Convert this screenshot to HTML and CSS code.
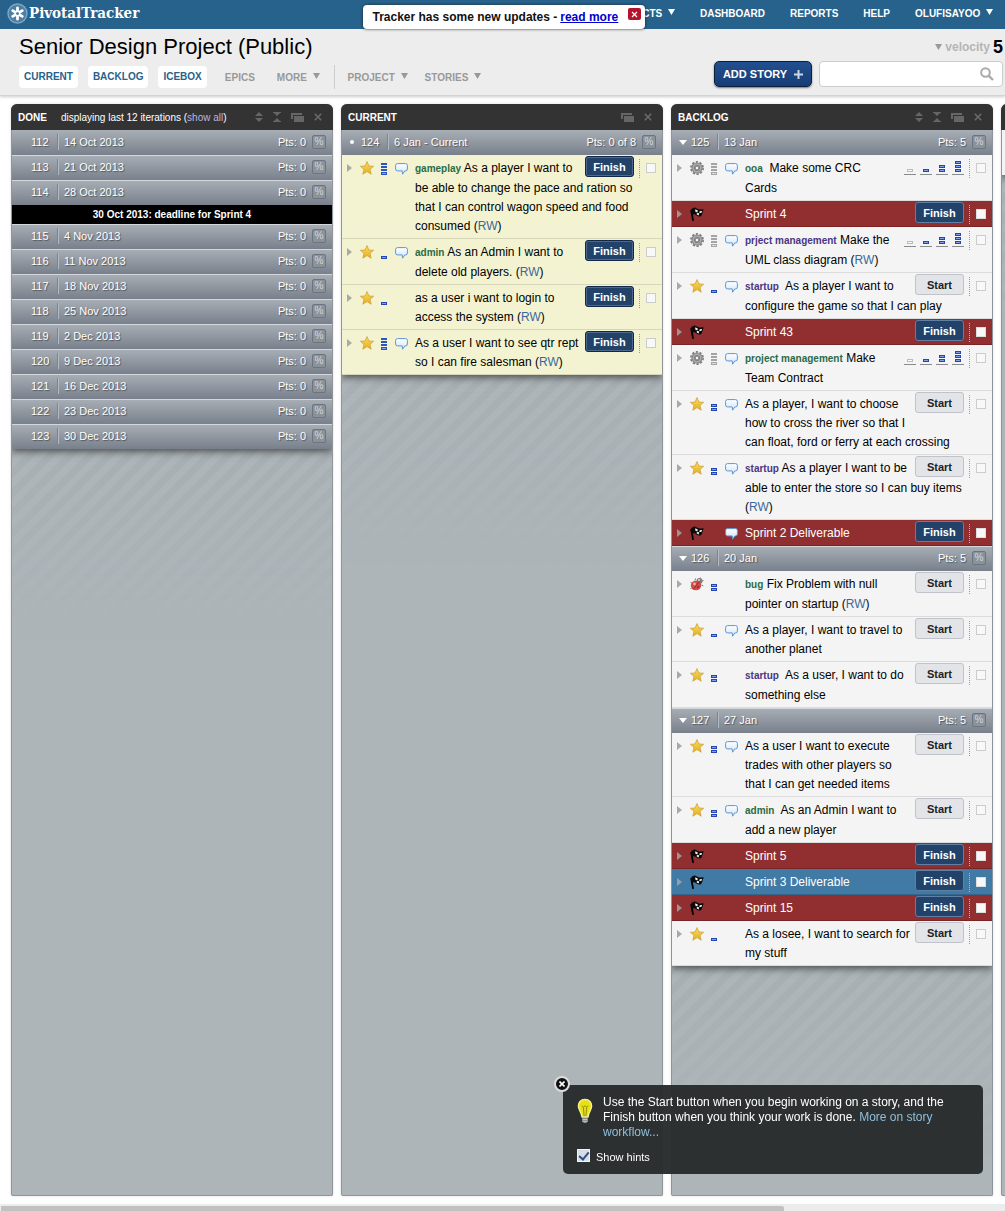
FILE: index.html
```html
<!DOCTYPE html>
<html lang="en">
<head>
<meta charset="utf-8">
<title>Senior Design Project - Pivotal Tracker</title>
<link rel="stylesheet" href="styles.css">
</head>
<body>
<svg class="sprite" aria-hidden="true">
  <defs>
    <linearGradient id="gold" x1="0" y1="0" x2="0" y2="1"><stop offset="0" stop-color="#f9dc63"/><stop offset="1" stop-color="#e5ae1c"/></linearGradient>
    <linearGradient id="sky" x1="0" y1="0" x2="0" y2="1"><stop offset="0" stop-color="#ffffff"/><stop offset="1" stop-color="#cfe3f8"/></linearGradient>
  </defs>
  <symbol id="caret" viewBox="0 0 5 8"><path d="M0 0L5 4L0 8z" fill="#a9a9a9"/></symbol>
  <symbol id="star" viewBox="0 0 14 14"><path d="M7 .6L8.9 5L13.6 5.3L10 8.4L11.2 13.2L7 10.6L2.8 13.2L4 8.4L.4 5.3L5.1 5z" fill="url(#gold)" stroke="#cfa23a" stroke-width=".8" stroke-linejoin="round"/></symbol>
  <symbol id="gear" viewBox="0 0 14 14"><circle cx="7" cy="7" r="6.100" fill="none" stroke="#777" stroke-width="1.600" stroke-dasharray="2.200 1.630"/><circle cx="7" cy="7" r="5.600" fill="#858585"/><circle cx="7" cy="7" r="3.800" fill="none" stroke="#adadad" stroke-width="1.400"/><circle cx="7" cy="7" r="1.900" fill="#f4f4f4" stroke="#6d6d6d" stroke-width=".8"/></symbol>
  <symbol id="bug" viewBox="0 0 14 14"><path d="M8 3L11 .8M10.500 5L13.500 3.500M11.500 8L13.300 8.800M5 3.500L5.500 1.500M1.500 6L.5 4.800M1.500 11L.5 12" stroke="#777" stroke-width="1"/><circle cx="9.500" cy="4" r="3" fill="#8a7d7d"/><ellipse cx="6" cy="8.500" rx="5.200" ry="4.800" fill="#cf4a48"/><path d="M9.500 4.500L3 12.500" stroke="#8e2424" stroke-width=".8"/><circle cx="4.500" cy="7" r="1.400" fill="#efb0a8"/><circle cx="8" cy="10" r="1" fill="#8e2424"/><circle cx="9" cy="3" r="1" fill="#ddd"/></symbol>
  <symbol id="flag" viewBox="0 0 14 14"><path d="M1.300 4L3 13.200" stroke="#000" stroke-width="1.800" stroke-linecap="round"/><path d="M.6 3.500C2.500 1 4 .2 5.500 .8S8.500 3 10.500 2.500L13.700 2.300L12.300 6.500C11.500 9.500 10 10 8 9.300C6 8.500 5 6.800 2.800 7.500L2 7.800z" fill="#0a0a0a"/><path d="M5.300 2.300L7.800 3.500L7.300 5.600L5.200 4.600zM9.600 4.200L12.200 3.900L11.300 6L9.400 6zM6.900 6L9.200 6.300L8.700 8.500L6.700 7.500z" fill="#f0f0f0"/></symbol>
  <symbol id="bubble" viewBox="0 0 13 12"><path d="M2.500 .6H10.500Q12.400 .6 12.400 2.500V6Q12.400 7.900 10.500 7.900H9.800L7.600 11.200L7.200 7.900H2.500Q.6 7.900 .6 6V2.500Q.6 .6 2.500 .6z" fill="url(#sky)" stroke="#5f96d2" stroke-width="1"/></symbol>
  <symbol id="bar" viewBox="0 0 6 3"><rect width="6" height="3" fill="#2348b5"/><rect x="1" y="1" width="4" height="1" fill="#7f9de8"/></symbol>
  <symbol id="p1" viewBox="0 0 6 12"><use href="#bar" y="9" width="6" height="3"/></symbol>
  <symbol id="p2" viewBox="0 0 6 12"><use href="#bar" y="5" width="6" height="3"/><use href="#bar" y="9" width="6" height="3"/></symbol>
  <symbol id="p3" viewBox="0 0 6 12"><path d="M0 0H6V2H0zM0 3H6V5H0zM0 6H6V8H0zM0 9H6V12H0z" fill="#2c55bf"/><path d="M1 10H5V11H1z" fill="#7f9de8"/></symbol>
  <symbol id="p0" viewBox="0 0 6 12"><path d="M0 0H6V2H0zM0 3H6V5H0zM0 6H6V8H0zM0 9H6V12H0z" fill="#a4a4a4"/><path d="M1 10H5V11H1z" fill="#ddd"/></symbol>
  <symbol id="est" viewBox="0 0 60 15"><path d="M0 13.500H12M16 13.500H28M32 13.500H44M48 13.500H60" stroke="#8a8a8a" stroke-width="1"/><rect x="3.500" y="8.500" width="5" height="2" fill="#fff" stroke="#bbb"/><use href="#bar" x="19" y="8" width="6" height="3"/><use href="#bar" x="35" y="4" width="6" height="3"/><use href="#bar" x="35" y="8" width="6" height="3"/><use href="#bar" x="51" y="0" width="6" height="3"/><use href="#bar" x="51" y="4" width="6" height="3"/><use href="#bar" x="51" y="8" width="6" height="3"/></symbol>
  <symbol id="down" viewBox="0 0 7 6"><path d="M0 0H7L3.500 6z" fill="currentColor"/></symbol>
  <symbol id="sort" viewBox="0 0 8 10"><path d="M0 4L4 0L8 4zM0 6L4 10L8 6z" fill="#666"/></symbol>
  <symbol id="squash" viewBox="0 0 8 10"><path d="M0 0H8V1H7L4 4L1 1H0zM0 10H8V9H7L4 6L1 9H0z" fill="#666"/></symbol>
  <symbol id="clone" viewBox="0 0 13 9"><path d="M0 0H11V2H2V6H0zM3 3H13V9H3z" fill="#666"/></symbol>
  <symbol id="x" viewBox="0 0 8 8"><path d="M.8 .8L7.200 7.200M7.200 .8L.8 7.200" stroke="#6a6a6a" stroke-width="1.600"/></symbol>
</svg>

<header class="topbar">
  <a class="logo" href="#">
    <svg width="21" height="21" viewBox="0 0 21 21" aria-hidden="true"><circle cx="10.500" cy="10.500" r="9.500" fill="#4a7fa6" stroke="#7ba5c3" stroke-width="1.500"/><g stroke="#fff" stroke-width="2.800" stroke-linecap="round"><path d="M10.500 8V4.800M12.600 9.200L15.300 7.600M12.600 11.800L15.300 13.400M10.500 13V16.200M8.400 11.800L5.700 13.400M8.400 9.200L5.700 7.600"/></g><circle cx="10.500" cy="10.500" r="1.300" fill="#4a7fa6"/></svg>
    <span>PivotalTracker</span>
  </a>
  <nav class="topnav">
    <a href="#">PROJECTS <svg width="7" height="6"><use href="#down"/></svg></a>
    <a href="#">DASHBOARD</a>
    <a href="#">REPORTS</a>
    <a href="#">HELP</a>
    <a href="#">OLUFISAYOO <svg width="7" height="6"><use href="#down"/></svg></a>
  </nav>
  <div class="toast">Tracker has some new updates - <a href="#">read more</a>
    <button class="toast-close" aria-label="Dismiss"><svg width="7" height="7" viewBox="0 0 7 7"><path d="M1 1L6 6M6 1L1 6" stroke="#fff" stroke-width="1.200"/></svg></button>
  </div>
</header>

<section class="project">
  <div class="project-main">
    <h1>Senior Design Project (Public)</h1>
    <nav class="tabs">
      <a class="chip" href="#">CURRENT</a>
      <a class="chip" href="#">BACKLOG</a>
      <a class="chip" href="#">ICEBOX</a>
      <a class="plain" href="#">EPICS</a>
      <a class="plain" href="#">MORE <svg width="7" height="6"><use href="#down"/></svg></a>
      <span class="rule"></span>
      <a class="menu" href="#">PROJECT <svg width="7" height="6"><use href="#down"/></svg></a>
      <a class="menu" href="#">STORIES <svg width="7" height="6"><use href="#down"/></svg></a>
    </nav>
  </div>
  <div class="project-side">
    <div class="velocity"><svg width="7" height="6"><use href="#down"/></svg><span>velocity</span><strong>5</strong></div>
    <div class="actions">
      <button class="add">ADD STORY <svg width="9" height="9" viewBox="0 0 9 9"><path d="M4.500 0V9M0 4.500H9" stroke="#c9d7e8" stroke-width="2"/></svg></button>
      <div class="search"><input type="text" aria-label="Search"><svg width="14" height="14" viewBox="0 0 14 14"><circle cx="5.500" cy="5.500" r="4.300" fill="none" stroke="#aaa" stroke-width="2"/><path d="M8.800 8.800L13 13" stroke="#aaa" stroke-width="2.400"/></svg></div>
    </div>
  </div>
</section>

<main class="board">
  <section class="panel">
    <header class="panel-head"><h2>DONE</h2><p>displaying last 12 iterations (<a href="#">show all</a>)</p>
      <div class="tools"><svg width="8" height="10"><use href="#sort"/></svg><svg width="8" height="10"><use href="#squash"/></svg><svg width="13" height="9"><use href="#clone"/></svg><svg width="8" height="8"><use href="#x"/></svg></div></header>
    <div class="list">
      <div class="iter"><i></i><b>112</b><span>14 Oct 2013</span><em>Pts: 0</em><button>%</button></div>
      <div class="iter"><i></i><b>113</b><span>21 Oct 2013</span><em>Pts: 0</em><button>%</button></div>
      <div class="iter"><i></i><b>114</b><span>28 Oct 2013</span><em>Pts: 0</em><button>%</button></div>
      <div class="deadline">30 Oct 2013: deadline for Sprint 4</div>
      <div class="iter"><i></i><b>115</b><span>4 Nov 2013</span><em>Pts: 0</em><button>%</button></div>
      <div class="iter"><i></i><b>116</b><span>11 Nov 2013</span><em>Pts: 0</em><button>%</button></div>
      <div class="iter"><i></i><b>117</b><span>18 Nov 2013</span><em>Pts: 0</em><button>%</button></div>
      <div class="iter"><i></i><b>118</b><span>25 Nov 2013</span><em>Pts: 0</em><button>%</button></div>
      <div class="iter"><i></i><b>119</b><span>2 Dec 2013</span><em>Pts: 0</em><button>%</button></div>
      <div class="iter"><i></i><b>120</b><span>9 Dec 2013</span><em>Pts: 0</em><button>%</button></div>
      <div class="iter"><i></i><b>121</b><span>16 Dec 2013</span><em>Pts: 0</em><button>%</button></div>
      <div class="iter"><i></i><b>122</b><span>23 Dec 2013</span><em>Pts: 0</em><button>%</button></div>
      <div class="iter"><i></i><b>123</b><span>30 Dec 2013</span><em>Pts: 0</em><button>%</button></div>
    </div>
    <div class="stripes"></div>
  </section>

  <section class="panel">
    <header class="panel-head"><h2>CURRENT</h2>
      <div class="tools"><svg width="13" height="9"><use href="#clone"/></svg><svg width="8" height="8"><use href="#x"/></svg></div></header>
    <div class="list">
      <div class="iter"><i class="dot"></i><b>124</b><span>6 Jan - Current</span><em>Pts: 0 of 8</em><button>%</button></div>
      <article class="story now">
        <svg class="caret"><use href="#caret"/></svg><svg class="kind"><use href="#star"/></svg><svg class="pts"><use href="#p3"/></svg><svg class="talk"><use href="#bubble"/></svg>
        <div class="text"><button class="act finish">Finish</button><a class="tag green" href="#">gameplay</a> As a player I want to be able to change the pace and ration so that I can control wagon speed and food consumed (<a class="who" href="#">RW</a>)</div>
        <div class="pick"><input type="checkbox" aria-label="Select story"></div>
      </article>
      <article class="story now">
        <svg class="caret"><use href="#caret"/></svg><svg class="kind"><use href="#star"/></svg><svg class="pts"><use href="#p1"/></svg><svg class="talk"><use href="#bubble"/></svg>
        <div class="text"><button class="act finish">Finish</button><a class="tag green" href="#">admin</a> As an Admin I want to delete old players. (<a class="who" href="#">RW</a>)</div>
        <div class="pick"><input type="checkbox" aria-label="Select story"></div>
      </article>
      <article class="story now">
        <svg class="caret"><use href="#caret"/></svg><svg class="kind"><use href="#star"/></svg><svg class="pts"><use href="#p1"/></svg>
        <div class="text"><button class="act finish">Finish</button>as a user i want to login to access the system (<a class="who" href="#">RW</a>)</div>
        <div class="pick"><input type="checkbox" aria-label="Select story"></div>
      </article>
      <article class="story now">
        <svg class="caret"><use href="#caret"/></svg><svg class="kind"><use href="#star"/></svg><svg class="pts"><use href="#p3"/></svg><svg class="talk"><use href="#bubble"/></svg>
        <div class="text"><button class="act finish">Finish</button>As a user I want to see qtr rept so I can fire salesman (<a class="who" href="#">RW</a>)</div>
        <div class="pick"><input type="checkbox" aria-label="Select story"></div>
      </article>
    </div>
    <div class="stripes"></div>
  </section>

  <section class="panel">
    <header class="panel-head"><h2>BACKLOG</h2>
      <div class="tools"><svg width="8" height="10"><use href="#sort"/></svg><svg width="8" height="10"><use href="#squash"/></svg><svg width="13" height="9"><use href="#clone"/></svg><svg width="8" height="8"><use href="#x"/></svg></div></header>
    <div class="list">
      <div class="iter"><i class="open"></i><b>125</b><span>13 Jan</span><em>Pts: 5</em><button>%</button></div>
      <article class="story">
        <svg class="caret"><use href="#caret"/></svg><svg class="kind"><use href="#gear"/></svg><svg class="pts"><use href="#p0"/></svg><svg class="talk"><use href="#bubble"/></svg>
        <div class="text"><svg class="est"><use href="#est"/></svg><a class="tag green" href="#">ooa</a>&nbsp; Make some CRC Cards</div>
        <div class="pick"><input type="checkbox" aria-label="Select story"></div>
      </article>
      <article class="story release">
        <svg class="caret"><use href="#caret"/></svg><svg class="kind"><use href="#flag"/></svg>
        <div class="text"><button class="act finish">Finish</button>Sprint 4</div>
        <div class="pick"><input type="checkbox" aria-label="Select story"></div>
      </article>
      <article class="story">
        <svg class="caret"><use href="#caret"/></svg><svg class="kind"><use href="#gear"/></svg><svg class="pts"><use href="#p0"/></svg><svg class="talk"><use href="#bubble"/></svg>
        <div class="text"><svg class="est"><use href="#est"/></svg><a class="tag violet" href="#">prject management</a> Make the UML class diagram (<a class="who" href="#">RW</a>)</div>
        <div class="pick"><input type="checkbox" aria-label="Select story"></div>
      </article>
      <article class="story">
        <svg class="caret"><use href="#caret"/></svg><svg class="kind"><use href="#star"/></svg><svg class="pts"><use href="#p1"/></svg><svg class="talk"><use href="#bubble"/></svg>
        <div class="text"><button class="act start">Start</button><a class="tag violet" href="#">startup</a>&nbsp; As a player I want to configure the game so that I can play</div>
        <div class="pick"><input type="checkbox" aria-label="Select story"></div>
      </article>
      <article class="story release">
        <svg class="caret"><use href="#caret"/></svg><svg class="kind"><use href="#flag"/></svg>
        <div class="text"><button class="act finish">Finish</button>Sprint 43</div>
        <div class="pick"><input type="checkbox" aria-label="Select story"></div>
      </article>
      <article class="story">
        <svg class="caret"><use href="#caret"/></svg><svg class="kind"><use href="#gear"/></svg><svg class="pts"><use href="#p0"/></svg><svg class="talk"><use href="#bubble"/></svg>
        <div class="text"><svg class="est"><use href="#est"/></svg><a class="tag green" href="#">project management</a> Make Team Contract</div>
        <div class="pick"><input type="checkbox" aria-label="Select story"></div>
      </article>
      <article class="story">
        <svg class="caret"><use href="#caret"/></svg><svg class="kind"><use href="#star"/></svg><svg class="pts"><use href="#p2"/></svg><svg class="talk"><use href="#bubble"/></svg>
        <div class="text"><button class="act start">Start</button>As a player, I want to choose how to cross the river so that I can float, ford or ferry at each crossing</div>
        <div class="pick"><input type="checkbox" aria-label="Select story"></div>
      </article>
      <article class="story">
        <svg class="caret"><use href="#caret"/></svg><svg class="kind"><use href="#star"/></svg><svg class="pts"><use href="#p2"/></svg><svg class="talk"><use href="#bubble"/></svg>
        <div class="text"><button class="act start">Start</button><a class="tag violet" href="#">startup</a> As a player I want to be able to enter the store so I can buy items (<a class="who" href="#">RW</a>)</div>
        <div class="pick"><input type="checkbox" aria-label="Select story"></div>
      </article>
      <article class="story release">
        <svg class="caret"><use href="#caret"/></svg><svg class="kind"><use href="#flag"/></svg><svg class="talk"><use href="#bubble"/></svg>
        <div class="text"><button class="act finish">Finish</button>Sprint 2 Deliverable</div>
        <div class="pick"><input type="checkbox" aria-label="Select story"></div>
      </article>
      <div class="iter"><i class="open"></i><b>126</b><span>20 Jan</span><em>Pts: 5</em><button>%</button></div>
      <article class="story">
        <svg class="caret"><use href="#caret"/></svg><svg class="kind"><use href="#bug"/></svg><svg class="pts"><use href="#p2"/></svg>
        <div class="text"><button class="act start">Start</button><a class="tag green" href="#">bug</a> Fix Problem with null pointer on startup (<a class="who" href="#">RW</a>)</div>
        <div class="pick"><input type="checkbox" aria-label="Select story"></div>
      </article>
      <article class="story">
        <svg class="caret"><use href="#caret"/></svg><svg class="kind"><use href="#star"/></svg><svg class="pts"><use href="#p1"/></svg><svg class="talk"><use href="#bubble"/></svg>
        <div class="text"><button class="act start">Start</button>As a player, I want to travel to another planet</div>
        <div class="pick"><input type="checkbox" aria-label="Select story"></div>
      </article>
      <article class="story">
        <svg class="caret"><use href="#caret"/></svg><svg class="kind"><use href="#star"/></svg><svg class="pts"><use href="#p2"/></svg>
        <div class="text"><button class="act start">Start</button><a class="tag violet" href="#">startup</a>&nbsp; As a user, I want to do something else</div>
        <div class="pick"><input type="checkbox" aria-label="Select story"></div>
      </article>
      <div class="iter"><i class="open"></i><b>127</b><span>27 Jan</span><em>Pts: 5</em><button>%</button></div>
      <article class="story">
        <svg class="caret"><use href="#caret"/></svg><svg class="kind"><use href="#star"/></svg><svg class="pts"><use href="#p2"/></svg><svg class="talk"><use href="#bubble"/></svg>
        <div class="text"><button class="act start">Start</button>As a user I want to execute trades with other players so that I can get needed items</div>
        <div class="pick"><input type="checkbox" aria-label="Select story"></div>
      </article>
      <article class="story">
        <svg class="caret"><use href="#caret"/></svg><svg class="kind"><use href="#star"/></svg><svg class="pts"><use href="#p2"/></svg><svg class="talk"><use href="#bubble"/></svg>
        <div class="text"><button class="act start">Start</button><a class="tag green" href="#">admin</a>&nbsp; As an Admin I want to add a new player</div>
        <div class="pick"><input type="checkbox" aria-label="Select story"></div>
      </article>
      <article class="story release">
        <svg class="caret"><use href="#caret"/></svg><svg class="kind"><use href="#flag"/></svg>
        <div class="text"><button class="act finish">Finish</button>Sprint 5</div>
        <div class="pick"><input type="checkbox" aria-label="Select story"></div>
      </article>
      <article class="story release ontime">
        <svg class="caret"><use href="#caret"/></svg><svg class="kind"><use href="#flag"/></svg>
        <div class="text"><button class="act finish">Finish</button>Sprint 3 Deliverable</div>
        <div class="pick"><input type="checkbox" aria-label="Select story"></div>
      </article>
      <article class="story release">
        <svg class="caret"><use href="#caret"/></svg><svg class="kind"><use href="#flag"/></svg>
        <div class="text"><button class="act finish">Finish</button>Sprint 15</div>
        <div class="pick"><input type="checkbox" aria-label="Select story"></div>
      </article>
      <article class="story">
        <svg class="caret"><use href="#caret"/></svg><svg class="kind"><use href="#star"/></svg><svg class="pts"><use href="#p1"/></svg>
        <div class="text"><button class="act start">Start</button>As a losee, I want to search for my stuff</div>
        <div class="pick"><input type="checkbox" aria-label="Select story"></div>
      </article>
    </div>
    <div class="stripes"></div>
  </section>

  <section class="panel">
    <header class="panel-head"></header>
    <div class="list"><div class="blank"></div></div>
    <div class="stripes"></div>
  </section>
</main>
<div class="scroll"><div class="thumb"></div></div>

<aside class="hint">
  <button class="hint-close" aria-label="Close hint"><svg width="6" height="6" viewBox="0 0 6 6"><path d="M.5 .5L5.500 5.500M5.500 .5L.5 5.500" stroke="#fff" stroke-width="1.600"/></svg></button>
  <svg class="bulb" viewBox="0 0 18 28" aria-hidden="true"><path d="M9 1C4 1 1.500 4.800 1.500 8.500C1.500 13 5 14.500 5.500 20.500H12.500C13 14.500 16.500 13 16.500 8.500C16.500 4.800 14 1 9 1z" fill="#e6e01a" stroke="#f7f58a" stroke-width="1.500"/><path d="M5.500 8L7.200 10L9 8L10.800 10L12.500 8M7.200 10L8 20M10.800 10L10 20" fill="none" stroke="#8d8508" stroke-width="1"/><path d="M6 20.500H12V26Q9 28.500 6 26z" fill="#c9c9c9"/><path d="M6 22.500H12M6 25H12" stroke="#777" stroke-width="1"/></svg>
  <p>Use the Start button when you begin working on a story, and the Finish button when you think your work is done. <a href="#">More on story workflow...</a></p>
  <label><input type="checkbox" checked><span>Show hints</span></label>
</aside>
</body>
</html>
```
FILE: styles.css
```css
* { box-sizing: border-box; }

body {
  margin: 0;
  min-height: 100vh;
  display: flex;
  flex-direction: column;
  background: #fff;
  font-family: "Liberation Sans", Arial, sans-serif;
  font-size: 12px;
  color: #000;
}

a { text-decoration: none; color: inherit; }
button { font-family: inherit; padding: 0; margin: 0; cursor: pointer; }
h1, h2, p { margin: 0; font-weight: normal; }
.sprite { position: absolute; width: 0; height: 0; }

/* Top bar */
.topbar {
  position: relative;
  height: 29px;
  display: flex;
  align-items: center;
  justify-content: space-between;
  padding: 0 12px 3px 7px;
  background: #26628b;
  color: #fff;
}
.logo { display: flex; align-items: center; gap: 1px; font: bold 15px "DejaVu Serif Condensed", "DejaVu Serif", serif; }
.topnav { display: flex; gap: 25px; font-size: 10px; font-weight: bold; }
.topnav svg, .tabs svg { margin: 0 0 2px 3px; }

.toast {
  position: absolute;
  top: 5px;
  left: calc(50% - 140px);
  width: 282px;
  height: 24px;
  padding: 0 4px 0 10px;
  display: flex;
  align-items: center;
  gap: 3px;
  white-space: nowrap;
  border-radius: 4px;
  background: #fff;
  box-shadow: 0 0 3px #222;
  color: #111;
  font-size: 12px;
  font-weight: bold;
}
.toast a { color: #00c; text-decoration: underline; }
.toast-close {
  margin: 0 0 6px auto;
  width: 13px;
  height: 12px;
  display: grid;
  place-items: center;
  border: 0;
  border-radius: 2px;
  background: #b5122b;
}

/* Project header */
.project {
  display: flex;
  justify-content: space-between;
  height: 67px;
  padding: 0 2px 0 19px;
  background: #ededed;
  border-bottom: 1px solid #d4d4d4;
  box-shadow: 0 1px 3px #ccc;
}
h1 { font-size: 22px; line-height: 36px; }
.tabs { display: flex; align-items: center; height: 24px; font-size: 10px; color: #999; font-weight: bold; white-space: nowrap; }
.chip { margin-right: 10px; padding: 0 5px; line-height: 22px; border-radius: 4px; background: #fff; color: #26628b; }
.plain { margin: 0 14px 0 8px; }
.rule { width: 1px; height: 24px; background: #ccc; margin-right: 13px; }
.menu { margin-right: 17px; }

.project-side { display: flex; flex-direction: column; align-items: flex-end; }
.velocity { display: flex; align-items: center; height: 32px; padding-top: 4px; gap: 3px; font-size: 12px; font-weight: bold; color: #b5b5b5; }
.velocity svg { color: #999; }
.velocity strong { font-size: 18px; color: #000; }
.actions { display: flex; gap: 7px; }
.add {
  width: 98px;
  height: 26px;
  display: flex;
  align-items: center;
  justify-content: center;
  gap: 7px;
  border: 1px solid #0c1f3c;
  border-radius: 5px;
  background: linear-gradient(#22508e, #173c75);
  box-shadow: 0 1px 2px #777;
  color: #fff;
  font-size: 11px;
  font-weight: bold;
}
.search { display: flex; align-items: center; width: 184px; height: 26px; padding-right: 8px; border: 1px solid #ccc; border-radius: 4px; background: #fff; }
.search input { flex: 1; min-width: 0; border: 0; outline: 0; background: none; }

/* Board */
.board { flex: 1; display: flex; gap: 8px; padding: 8px 0 8px 11px; overflow: hidden; }
.panel {
  flex: 0 0 322px;
  border: 1px solid #8f9598;
  border-top: 0;
  border-radius: 6px 6px 2px 2px;
  background: #adb5b9;
  box-shadow: 0 0 3px #ddd;
}
.panel-head {
  display: flex;
  align-items: center;
  height: 26px;
  margin: 0 -1px;
  padding: 0 11px 0 7px;
  border-radius: 6px 6px 0 0;
  background: #333;
  color: #fff;
}
.panel-head h2 { font-size: 10px; font-weight: bold; }
.panel-head p { margin-left: 14px; font-size: 10px; }
.panel-head p a { color: #b9b3e8; }
.tools { display: flex; align-items: center; gap: 10px; margin-left: auto; }
.list { position: relative; z-index: 1; box-shadow: 0 2px 8px #444; clip-path: inset(0 0 -14px 0); }
.blank { height: 45px; background: #f4f4f4; }
.stripes {
  height: 190px;
  background: repeating-linear-gradient(135deg, #a7afb3 0 7px, #adb5b9 7px 14px);
  mask-image: linear-gradient(#000, transparent);
}

.iter {
  display: flex;
  align-items: center;
  height: 25px;
  padding: 0 6px 2px 0;
  border-top: 1px solid #d3d7db;
  background: linear-gradient(#a7adb4, #78808c);
  color: #fff;
  font-size: 11px;
  line-height: 16px;
  text-shadow: 1px 1px 1px #555;
}
.panel-head + .list .iter:first-child { border-top-color: #a7adb4; }
.iter b { width: 27px; font-weight: normal; }
.iter i { width: 19px; height: 8px; display: flex; justify-content: center; align-items: center; }
.iter .dot::before { content: ""; width: 4px; height: 4px; border-radius: 2px; background: #fff; }
.iter .open::before { content: ""; border: 4px solid transparent; border-top: 5px solid #fff; border-bottom: 0; margin-left: 3px; }
.iter span { padding-left: 5px; border-left: 1px solid #b4bac1; box-shadow: -1px 0 #7c848e; }
.iter em { margin: 0 6px 0 auto; font-style: normal; }
.iter button {
  width: 14px;
  height: 14px;
  line-height: 12px;
  border: 1px solid #6d747c;
  border-radius: 2px;
  background: #8b929a;
  color: #d4d8dc;
  font-size: 10px;
  text-align: center;
}
.deadline { background: #000; color: #fff; font-size: 10px; font-weight: bold; line-height: 19px; text-align: center; }

/* Stories */
.story {
  display: grid;
  grid-template-columns: 13px 21px 14px 20px 1fr 23px;
  align-items: start;
  padding: 3px 0 2px 5px;
  background: #f4f4f4;
  border-bottom: 1px solid #dcdcdc;
}
.now { background: #f3f3d1; border-color: #d6d6b8; }
.caret { grid-column: 1; grid-row: 1; width: 5px; height: 8px; margin-top: 6px; }
.kind { grid-column: 2; grid-row: 1; width: 14px; height: 14px; margin-top: 3px; }
.pts { grid-column: 3; grid-row: 1; width: 6px; height: 12px; margin-top: 5px; }
.talk { grid-column: 4; grid-row: 1; width: 13px; height: 12px; margin-top: 5px; }
.text { grid-column: 5; grid-row: 1; padding-top: 1px; line-height: 19px; }
.pick { grid-column: 6; grid-row: 1; height: 19px; margin-top: 1px; padding: 4px 0 0 6px; border-left: 1px dotted #999; }
.pick input { appearance: none; display: block; width: 10px; height: 10px; margin: 0; border: 1px solid #ccc; background: #f8f8f8; }
.tag { font-size: 10px; font-weight: bold; line-height: 20px; }
.green { color: #2a6b45; }
.violet { color: #4b3583; }
.who { color: #3a689c; }
.est { float: right; width: 60px; height: 15px; margin: 2px 5px 0 10px; }
.act { float: right; width: 49px; height: 21px; margin: -3px 5px 2px 3px; border-radius: 3px; font-size: 11px; font-weight: bold; }
.finish { border: 1px solid #12284a; background: #23426a; box-shadow: inset 0 0 0 1px #4d6a8c; color: #fff; }
.start { border: 1px solid #c0c3ca; background: #e3e4e8; color: #222; }

.release { background: #912f30; border-color: #7a2425; color: #fff; }
.release .act { margin-bottom: 1px; border-color: #5f7fa5; box-shadow: none; }
.release .caret { opacity: .8; }
.release .pick { border-color: #d0b0b0; }
.release .pick input { border-color: #ddd; }
.ontime { background: #417aa5; border-color: #34648a; }

/* Horizontal scroller */
.scroll { height: 7px; padding: 2px 0 0 1px; background: #ececec; }
.thumb { width: 78%; height: 5px; background: #c1c1c1; border-radius: 0 2px 0 0; }

/* Hint */
.hint {
  position: fixed;
  z-index: 2;
  right: 22px;
  bottom: 37px;
  width: 420px;
  display: grid;
  grid-template-columns: 26px 1fr;
  row-gap: 8px;
  padding: 10px 30px 8px 14px;
  border-radius: 5px;
  background: rgba(40, 43, 44, .96);
  color: #fff;
  line-height: 15px;
}
.hint p a { color: #8fbfdd; }
.bulb { width: 16px; height: 28px; margin-top: 2px; }
.hint label { grid-column: 1 / 3; display: flex; align-items: center; gap: 6px; font-size: 11px; height: 18px; }
.hint input {
  appearance: none;
  display: grid;
  place-items: center;
  width: 13px;
  height: 13px;
  margin: 0 0 4px;
  border: 1px solid #f4f4f4;
  background: #d5dde8;
}
.hint input:checked::before {
  content: "";
  width: 4px;
  height: 8px;
  margin-bottom: 2px;
  border: solid #34507c;
  border-width: 0 2px 2px 0;
  transform: rotate(40deg);
}
.hint-close {
  position: absolute;
  left: -9px;
  top: -9px;
  width: 16px;
  height: 16px;
  display: grid;
  place-items: center;
  border: 2px solid #ddd;
  border-radius: 8px;
  background: #111;
}
```
